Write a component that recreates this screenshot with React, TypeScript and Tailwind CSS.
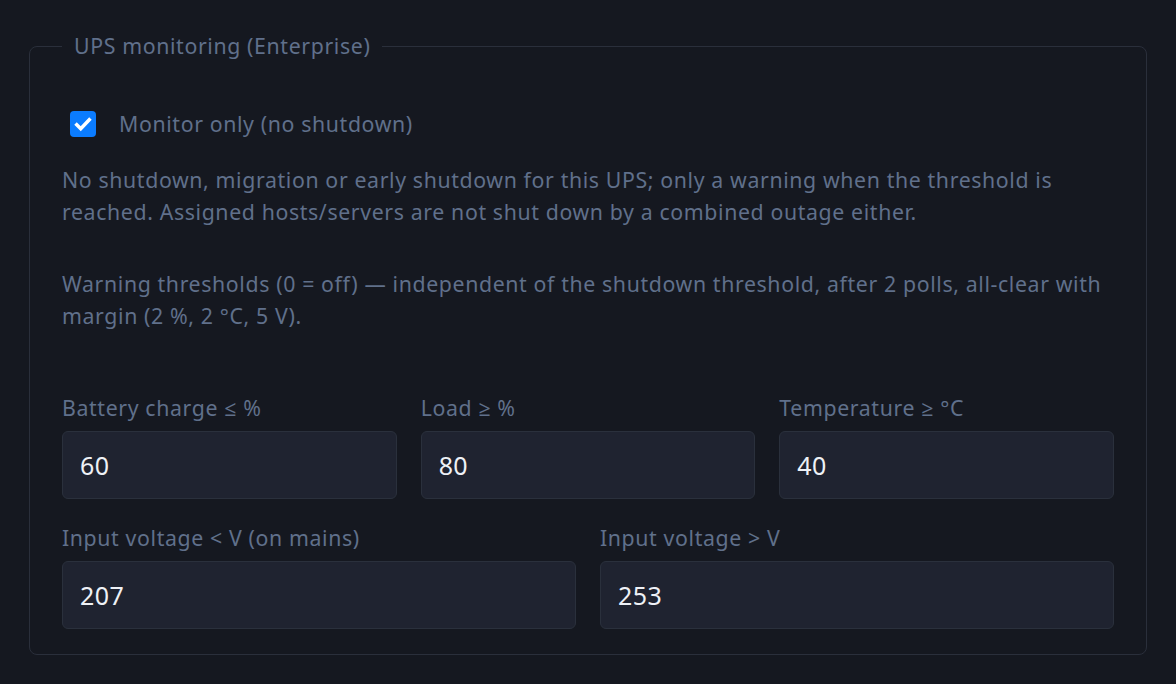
import { useState } from "react";

type Field = { label: string; value: string };

const topRow: Field[] = [
  { label: "Battery charge ≤ %", value: "60" },
  { label: "Load ≥ %", value: "80" },
  { label: "Temperature ≥ °C", value: "40" },
];

const voltageRow: Field[] = [
  { label: "Input voltage < V (on mains)", value: "207" },
  { label: "Input voltage > V", value: "253" },
];

function NumberField({ label, value }: Field) {
  const [v, setV] = useState(value);
  return (
    <label className="flex flex-col gap-[7px] min-w-0">
      <span className="text-[#60708b] leading-[32px]">{label}</span>
      <input
        value={v}
        onChange={(e) => setV(e.target.value)}
        className="h-[68px] w-full rounded-[6px] border border-[#2a303c] bg-[#1f2330] px-[17px] text-[25px] tracking-[0.4px] text-[#eef1f6] outline-none"
      />
    </label>
  );
}

export default function App() {
  const [monitorOnly, setMonitorOnly] = useState(true);

  return (
    <div
      className="min-h-screen bg-[#151820] px-[29px] pt-[30px] pb-[28px] text-[21.3px] leading-[32px] tracking-[0.62px]"
      style={{ fontFamily: '"Noto Sans", "Open Sans", sans-serif' }}
    >
      <fieldset className="rounded-[8px] border border-[#2a2f3b] px-8 pb-[25px]">
        <legend className="ml-0 px-3 text-[#60708b]">UPS monitoring (Enterprise)</legend>

        {/* monitor-only toggle */}
        <label className="mt-[46px] flex cursor-pointer items-center gap-[23px] pl-2">
          <span
            onClick={() => setMonitorOnly(!monitorOnly)}
            className={
              "flex h-[26px] w-[26px] items-center justify-center rounded-[4px] " +
              (monitorOnly ? "bg-[#0b7cff]" : "border-2 border-[#6b7280]")
            }
          >
            {monitorOnly && (
              <svg viewBox="0 0 16 16" className="h-[20px] w-[20px]">
                <path d="M3 8.5l3.2 3.2L13 4.6" fill="none" stroke="#fff" strokeWidth="2.8" strokeLinecap="square" />
              </svg>
            )}
          </span>
          <span className="text-[#60708b]">Monitor only (no shutdown)</span>
        </label>

        <p className="mt-6 text-[#60708b]">
          No shutdown, migration or early shutdown for this UPS; only a warning when the threshold is reached.
          Assigned hosts/servers are not shut down by a combined outage either.
        </p>

        <p className="mt-10 text-[#60708b]">
          Warning thresholds (0 = off) — independent of the shutdown threshold, after 2 polls, all-clear with
          margin (2 %, 2 °C, 5 V).
        </p>

        <div className="mt-[60px] grid grid-cols-3 gap-6">
          {topRow.map((f) => (
            <NumberField key={f.label} {...f} />
          ))}
        </div>

        <div className="mt-[23px] grid grid-cols-2 gap-6">
          {voltageRow.map((f) => (
            <NumberField key={f.label} {...f} />
          ))}
        </div>
      </fieldset>
    </div>
  );
}
